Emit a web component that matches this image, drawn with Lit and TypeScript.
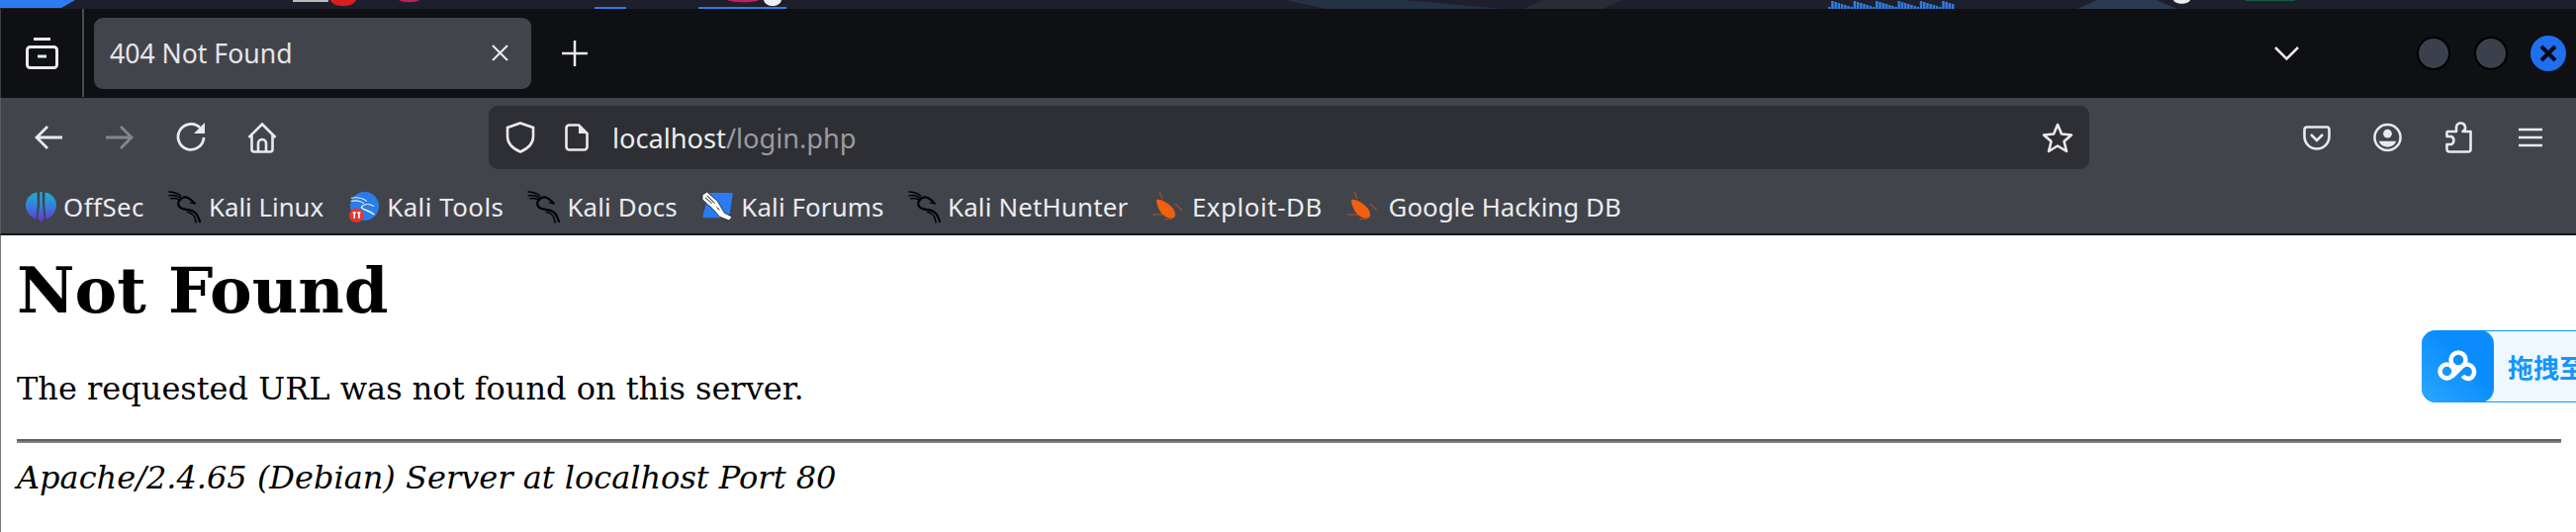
import { LitElement, html, css, svg } from "lit";
import { customElement } from "lit/decorators.js";

const dragon = html`<svg class="bi" viewBox="0 0 32 32"><g fill="none" stroke="#000" stroke-linecap="round" stroke-linejoin="round"><path stroke-width="1.500" d="M0 0C4 0 8 1 12 4M0 4C4 3 8 4 11.500 6M2 7C6 6 9 7 12 9"/><path stroke-width="2.300" d="M26.500 12C23 8 20 5 16 5.500C12 6 9 9.500 9.500 13C10 16.500 14 18 18 18.500C23 19 28 21 30 26L32 31"/><path stroke-width="1.500" d="M26.500 12L22 11.500M19 21C23 22 26 24 27 28L28 32"/></g></svg>`;

const bug = html`<svg class="bi bug" viewBox="0 0 30 30"><g class="soft"><g stroke="#a8552a" stroke-width="1.600" fill="none" opacity=".7"><path d="M7 0L10 7M0 23L10 23M23 12L30 19M12 28L20 27"/></g><path fill="#f0600e" d="M4 8C9 7 15 11 20 16C23 19 24 24 22 26C17 28 11 25 8 20C6 17 4 12 4 8Z"/></g></svg>`;

const offsec = html`<svg class="bi" viewBox="0 0 30 30"><defs><linearGradient id="o" x1="0" y1="0" x2="0" y2="1"><stop offset="0" stop-color="#16b6d8"/><stop offset=".55" stop-color="#3c74d8"/><stop offset="1" stop-color="#6a2fd0"/></linearGradient></defs><path fill="url(#o)" d="M11 .5L11.500 13L10 27C4 24 0 19 0 13C0 7 4 2 11 .5ZM19 .5C26 2 30 7 30 13C30 19 26 24 20 27L18.500 13ZM14 0H16L16.500 14L18 26L15 30L12 26L13.500 14Z"/></svg>`;

const tools = html`<svg class="bi" viewBox="0 0 30 30"><circle cx="16" cy="14" r="14" fill="#2a7de8"/><g fill="none" stroke="#e8f0fa" stroke-linecap="round"><path stroke-width="1" d="M3 6C9 5 14 6 18 9M3 9C8 8 12 9 15 11M25 14C20 11 14 12 13 15"/><path stroke-width="1.400" d="M13 15C14 18 21 18 25 22"/></g><circle cx="8" cy="23" r="7" fill="#e6342e"/><path stroke="#fff" stroke-width="1.600" d="M4.500 20.500H7.500M6 20.500V26M9 20.500H12M10.500 20.500V26"/></svg>`;

const forums = html`<svg class="bi" viewBox="0 0 32 32"><path fill="#2b7bf2" d="M8 1H30.500Q32 1 31.700 2.500L28 26Q27.700 27 26.500 27H1.500Q0 27 .4 25.500L6.500 2.500Q7 1 8 1Z"/><path fill="#fff" stroke="#15151a" stroke-width=".8" stroke-linejoin="round" d="M0 3L5 0L16 10L23 22L31 26L28 30L18 26L11 18L0 8Z"/><path stroke="#15151a" stroke-width="1" fill="none" d="M5 4L13 12M3 6L10 12M15 16L18 19"/></svg>`;

const bookmarks = [
  { name: "OffSec", icon: offsec, gap: 7, ls: 0.5 },
  { name: "Kali Linux", icon: dragon, gap: 9, ls: 0 },
  { name: "Kali Tools", icon: tools, gap: 8, ls: 0.5 },
  { name: "Kali Docs", icon: dragon, gap: 8, ls: 0.2 },
  { name: "Kali Forums", icon: forums, gap: 8.5, ls: 0.15 },
  { name: "Kali NetHunter", icon: dragon, gap: 8.5, ls: 0.2 },
  { name: "Exploit-DB", icon: bug, gap: 9.6, ls: 0.6 },
  { name: "Google Hacking DB", icon: bug, gap: 11.7, ls: 0.05 },
];

const wave = Array.from({ length: 40 }, (_, i) => {
  const h = 2 + ((i * 13) % 7);
  return svg`<rect x=${1848 + i * 3.200} y=${9 - h} width="2.500" height=${h} fill="#2f7de0"/>`;
});

@customElement("app-root")
export class AppRoot extends LitElement {
  static styles = css`
    :host { display: block; background: #fff; height: 538px; overflow: hidden; position: relative; font-family: "Noto Sans", sans-serif; }
    .desk { display: block; width: 2604px; height: 9px; }
    .tabbar { height: 90px; background: #0e1014; display: flex; align-items: center; border-left: 1px solid #3c3e44; box-sizing: border-box; }
    .view { width: 84px; height: 89px; display: flex; align-items: center; justify-content: center; border-right: 2px solid #4a4c52; box-sizing: border-box; margin-top: -1px; }
    .tab { width: 442px; height: 72px; margin-left: 10px; background: #42444c; border-radius: 9px; display: flex; align-items: center; justify-content: space-between; padding: 0 23px 0 16px; box-sizing: border-box; color: #e6e6e8; font-size: 26.600px; margin-top: -1px; }
    .plus { margin-left: 31px; display: block; }
    .spacer { flex: 1; }
    .chev { margin-right: 119px; display: block; }
    .wbtn { width: 34px; height: 34px; border-radius: 50%; background: #3c3f4c; border: 2px solid #000; box-sizing: border-box; margin-right: 24px; }
    .wbtn.close { width: 36px; height: 36px; border: 0; background: #1f6fee; margin-right: 10px; display: flex; align-items: center; justify-content: center; margin-left: -1px; }
    .chrome { background: #42444c; height: 139px; border-left: 1px solid #5a5c62; border-bottom: 2px solid #16171a; box-sizing: border-box; }
    .nav { height: 72px; padding-top: 8px; box-sizing: border-box; display: flex; align-items: center; }
    .nb { display: flex; align-items: center; justify-content: center; width: 72px; flex: none; }
    .navs { display: flex; margin-left: 12px; width: 481px; flex: none; }
    .url { width: 1618px; height: 64px; background: #2e2f34; border-radius: 9px; display: flex; align-items: center; box-sizing: border-box; padding-left: 17px; flex: none; }
    .url svg { display: block; flex: none; }
    .doc { margin-left: 30px; }
    .addr { margin-left: 24px; font-size: 27.200px; color: #ececee; padding-top: 1px; }
    .addr span { color: #9a9ba0; }
    .star { margin-left: auto; margin-right: 16px; }
    .tools { display: flex; align-items: center; margin-left: 215px; gap: 0; }
    .tools .nb { width: 29px; }
    .t1 { margin-right: 43px; }
    .t2 { margin-right: 43px; }
    .t3 { margin-right: 43px; }
    .marks { height: 66px; display: flex; align-items: center; padding: 10px 0 0 25px; box-sizing: border-box; gap: 25px; }
    .mk { display: flex; align-items: center; color: #ececee; font-size: 25.800px; white-space: nowrap; }
    .bi { width: 31px; height: 31px; flex: none; display: block; overflow: visible; }
    .bug { width: 30px; height: 30px; }
    .soft { filter: blur(.6px); }
    .page { border-left: 1px solid #777; height: 300px; box-sizing: border-box; padding: 0 15px 0 16px; font-family: "DejaVu Serif", serif; color: #000; }
    h1 { margin: 0; padding-top: 18px; font-size: 64px; font-weight: 700; line-height: 76px; }
    p { margin: 39px 0 0; font-size: 32px; line-height: 44px; }
    hr { margin: 29px 0 0; border: 0; border-top: 2px solid #5e5e5e; height: 2px; background: #828282; }
    address { margin-top: 13px; font-size: 32px; line-height: 44px; font-style: italic; }
    .baidu { position: absolute; left: 2448px; top: 334px; width: 170px; height: 73px; display: flex; align-items: center; background: #f0f8ff; border: 1px solid #1296ff; border-radius: 14px 0 0 14px; box-sizing: border-box; }
    .blogo { width: 73px; height: 73px; margin: -1px 0 -1px -1px; border-radius: 14px; background: linear-gradient(45deg, #2aa8ff, #0a8cff 60%); display: flex; align-items: center; justify-content: center; flex: none; }
    .btxt { margin-left: 14px; color: #1296ff; font: 700 26px "Noto Sans CJK SC", sans-serif; white-space: nowrap; }
  `;

  render() {
    const ic = "#eaeaec";
    return html`
      <svg class="desk" viewBox="0 0 2604 9">
        <rect width="2604" height="9" fill="#1d202c"/>
        <path d="M1300 0L1420 0L1520 9H1340Z" fill="#253246"/><path d="M1560 0H1640L1620 9H1540Z" fill="#2a2c35"/><path d="M2120 0H2180L2200 9H2100Z" fill="#2a3a52"/>
        <path d="M0 0H76L62 8H0Z" fill="#2d7bf0"/><rect x="296" y="0" width="36" height="2" fill="#bbb"/><path d="M334 0H360C358 5 351 6 347 6C342 6 336 5 334 0Z" fill="#d81e1e"/><path d="M403 0H424C420 3 408 3 403 0Z" fill="#c2205c"/>
        <rect x="601" y="7" width="32" height="2" fill="#2a7de8"/><rect x="706" y="7" width="89" height="2" fill="#2a7de8"/><path d="M735 0H767C765 3 740 3 735 0Z" fill="#c2205c"/><path d="M772 0H790C788 8 774 8 772 0Z" fill="#eee"/>
        ${wave}
        <path d="M2197 0H2214C2212 5 2199 5 2197 0Z" fill="#eee"/><rect x="2270" y="0" width="50" height="1" fill="#1a5a44"/>
      </svg>
      <div class="tabbar">
        <div class="view"><svg width="33" height="33" viewBox="0 0 33 33" fill="none" stroke=${ic} stroke-width="3"><path d="M8 2.500H25"/><rect x="1.500" y="10.500" width="30" height="21" rx="3"/><path d="M12 20H21"/></svg></div>
        <div class="tab"><span>404 Not Found</span><svg width="17" height="17" viewBox="0 0 17 17" stroke=${ic} stroke-width="2"><path d="M1 1L16 16M16 1L1 16"/></svg></div>
        <svg class="plus" width="26" height="26" viewBox="0 0 26 26" stroke=${ic} stroke-width="2.500"><path d="M13 0V26M0 13H26"/></svg>
        <div class="spacer"></div>
        <svg class="chev" width="25" height="14" viewBox="0 0 25 14" fill="none" stroke=${ic} stroke-width="2.500"><path d="M1 1L12.500 12.500L24 1"/></svg>
        <div class="wbtn"></div><div class="wbtn"></div>
        <div class="wbtn close"><svg width="18" height="18" viewBox="0 0 18 18" stroke="#0a0a14" stroke-width="4"><path d="M2 2L16 16M16 2L2 16"/></svg></div>
      </div>
      <div class="chrome">
        <div class="nav">
          <div class="navs">
            <div class="nb"><svg width="28" height="24" viewBox="0 0 28 24" fill="none" stroke=${ic} stroke-width="2.800"><path d="M28 12H2M13 1L2 12L13 23"/></svg></div>
            <div class="nb"><svg width="28" height="24" viewBox="0 0 28 24" fill="none" stroke="#85868b" stroke-width="2.800"><path d="M0 12H26M15 1L26 12L15 23"/></svg></div>
            <div class="nb"><svg width="30" height="30" viewBox="0 0 30 30" fill="none" stroke=${ic} stroke-width="2.800"><path d="M24 5A13 13 0 1 0 28 15"/><path fill=${ic} stroke="none" d="M29 0V11H18Z"/></svg></div>
            <div class="nb"><svg width="30" height="31" viewBox="0 0 30 31" fill="none" stroke=${ic} stroke-width="2.600"><path d="M1.500 15L15 1.500L28.500 15M4.500 12.500V27A2.500 2.500 0 0 0 7 29.500H23A2.500 2.500 0 0 0 25.500 27V12.500M11 29.500V21A4 4 0 0 1 19 21V29.500"/></svg></div>
          </div>
          <div class="url">
            <svg width="30" height="32" viewBox="0 0 30 32" fill="none" stroke=${ic} stroke-width="2.600"><path d="M15 1.500L28 6V15C28 23 21 28 15 30.500C9 28 2 23 2 15V6Z"/></svg>
            <svg class="doc" width="24" height="28" viewBox="0 0 24 28" fill="none" stroke=${ic} stroke-width="2.600"><path d="M4 1.500H14L22.500 10V23.500A3 3 0 0 1 19.500 26.500H4.500A3 3 0 0 1 1.500 23.500V4A3 3 0 0 1 4 1.500Z"/><path fill=${ic} stroke="none" d="M14 1.500L22.500 10H14Z"/></svg>
            <div class="addr">localhost<span>/login.php</span></div>
            <svg class="star" width="32" height="31" viewBox="0 0 32 31" fill="none" stroke=${ic} stroke-width="2.600" stroke-linejoin="round"><path d="M16 2L20 11.500L30 12.500L22.500 19L25 29L16 23.500L7 29L9.500 19L2 12.500L12 11.500Z"/></svg>
          </div>
          <div class="tools">
            <div class="nb t1"><svg width="28" height="25" viewBox="0 0 28 25" fill="none" stroke=${ic} stroke-width="2.600"><path d="M4 1.500H24A2.500 2.500 0 0 1 26.500 4V11A12.500 12.500 0 0 1 1.500 11V4A2.500 2.500 0 0 1 4 1.500ZM8 9L14 15L20 9"/></svg></div>
            <div class="nb t2"><svg width="30" height="30" viewBox="0 0 30 30" fill="none" stroke=${ic} stroke-width="2.600"><circle cx="15" cy="15" r="13.500"/><circle cx="15" cy="11" r="4.500" fill=${ic} stroke="none"/><path d="M6 19H24C22 24 18 25 15 25C12 25 8 24 6 19Z" fill=${ic} stroke="none"/></svg></div>
            <div class="nb t3"><svg width="27" height="32" viewBox="0 0 27 32" fill="none" stroke=${ic} stroke-width="2.600" stroke-linejoin="round"><path d="M2 10H11V6A4.500 4.500 0 0 1 15 1.500A4.500 4.500 0 0 1 17.500 10H25.500V28A2.500 2.500 0 0 1 23 30.500H4A2.500 2.500 0 0 1 1.500 28V23H6A4.500 4.500 0 0 0 6 15H1.500V11Z"/></svg></div>
            <div class="nb"><svg width="24" height="20" viewBox="0 0 24 20" stroke=${ic} stroke-width="2.600"><path d="M0 2H24M0 10H24M0 18H24"/></svg></div>
          </div>
        </div>
        <div class="marks">
          ${bookmarks.map((b) => html`<div class="mk" style="gap:${b.gap}px;letter-spacing:${b.ls}px">${b.icon}<span>${b.name}</span></div>`)}
        </div>
      </div>
      <div class="page">
        <h1>Not Found</h1>
        <p>The requested URL was not found on this server.</p>
        <hr />
        <address>Apache/2.4.65 (Debian) Server at localhost Port 80</address>
      </div>
      <div class="baidu">
        <div class="blogo"><svg width="42" height="34" viewBox="0 0 42 34" fill="none" stroke="#fff" stroke-width="4.500"><circle cx="21" cy="10" r="7.500"/><circle cx="9.500" cy="21.500" r="7"/><path d="M15 26.500L26 15.500A7.500 7.500 0 1 1 32.500 29C29 29 27 28 25.500 26"/></svg></div>
        <span class="btxt">拖拽至</span>
      </div>
    `;
  }
}
